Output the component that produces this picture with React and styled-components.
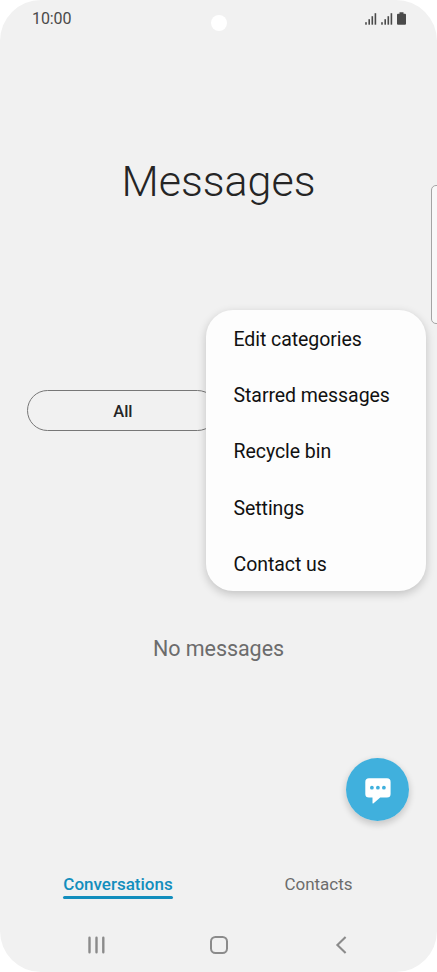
import React from 'react';
import styled, { createGlobalStyle } from 'styled-components';

const menuItems = [
    'Edit categories',
    'Starred messages',
    'Recycle bin',
    'Settings',
    'Contact us',
]

function Signal() {
    return (
        <svg width="12" height="12" viewBox="0 0 12 12" fill="#4a4a4a">
            <rect x="0.2" y="9.2" width="1.6" height="2.5" />
            <rect x="3.4" y="6.2" width="1.6" height="5.5" />
            <rect x="6.5" y="3.2" width="1.6" height="8.5" />
            <rect x="9.6" y="0.2" width="1.6" height="11.5" />
        </svg>
    );
}

function Battery() {
    return (
        <svg width="9" height="13" viewBox="0 0 9 13" fill="#4a4a4a">
            <path d="M2.5 0.3h4v1.4H8q1 0 1 1v9q0 1-1 1H1q-1 0-1-1v-9q0-1 1-1h1.5z" />
        </svg>
    );
}

export default function App() {
    return (
        <Phone>
            <GlobalStyle />
            <StatusBar>
                <Clock>10:00</Clock>
                <Camera />
                <StatusIcons>
                    <Signal />
                    <Signal />
                    <Battery />
                </StatusIcons>
            </StatusBar>
            <Header>
                <Title>Messages</Title>
            </Header>
            <Categories>
                <Category>All</Category>
            </Categories>
            <Empty>No messages</Empty>
            <Compose>
                <ComposeButton>
                    <svg width="26" height="26" viewBox="0 0 26 26">
                        <path d="M4 0.3H22Q25.6 0.3 25.6 4V16Q25.6 19.6 22 19.6H15.2L8.6 25.3Q7.5 26 7.5 24.7V19.6H4Q0.3 19.6 0.3 16V4Q0.3 0.3 4 0.3Z" fill="#fff" />
                        <circle cx="6.9" cy="9.7" r="1.9" fill="#40b0dd" />
                        <circle cx="12.9" cy="9.7" r="1.9" fill="#40b0dd" />
                        <circle cx="18.9" cy="9.7" r="1.9" fill="#40b0dd" />
                    </svg>
                </ComposeButton>
            </Compose>
            <Tabs>
                <Tab $active>Conversations</Tab>
                <Tab>Contacts</Tab>
            </Tabs>
            <NavBar>
                <svg width="18" height="18" viewBox="0 0 18 18" stroke="#8b8b8b" strokeWidth="2.4" strokeLinecap="round">
                    <path d="M2.5 1.8V16.2M9.5 1.8V16.2M16.3 1.8V16.2" />
                </svg>
                <svg width="18" height="18" viewBox="0 0 18 18" fill="none" stroke="#8b8b8b" strokeWidth="2">
                    <rect x="1" y="1" width="16" height="16" rx="4.5" />
                </svg>
                <svg width="18" height="18" viewBox="0 0 18 18" fill="none" stroke="#8b8b8b" strokeWidth="2.1">
                    <path d="M12.6 1L4.4 9L12.6 17" />
                </svg>
            </NavBar>
            <EdgePanel />
            <Menu>
                {menuItems.map((item) => (
                    <MenuItem key={item}>{item}</MenuItem>
                ))}
            </Menu>
        </Phone>
    );
}

const GlobalStyle = createGlobalStyle`
    * {
        box-sizing: border-box;
    }
    body {
        margin: 0;
        background: #fff;
        font-family: Roboto, sans-serif;
    }
    svg {
        display: block;
    }
`

const Phone = styled.div`
    position: relative;
    display: flex;
    flex-direction: column;
    width: 437px;
    height: 972px;
    overflow: hidden;
    border-radius: 41px;
    background: #f1f1f1;
`

const StatusBar = styled.div`
    display: grid;
    grid-template-columns: 1fr 16px 1fr;
    align-items: center;
    height: 38px;
    padding: 0 31px 0 32px;
`

const Clock = styled.span`
    font-size: 16px;
    line-height: 20px;
    letter-spacing: -0.1px;
    color: #4a4a4a;
`

const Camera = styled.div`
    width: 16px;
    height: 16px;
    margin-top: 8px;
    border-radius: 50%;
    background: #fff;
`

const StatusIcons = styled.div`
    display: flex;
    justify-content: flex-end;
    align-items: flex-end;
    gap: 4px;
    margin-top: -2px;
`

const Header = styled.header`
    display: flex;
    justify-content: center;
    align-items: center;
    height: 286px;
`

const Title = styled.h1`
    margin: 0;
    font-size: 43px;
    font-weight: 300;
    line-height: 50px;
    color: #252525;
`

const Categories = styled.div`
    display: flex;
    height: 107px;
    padding: 66px 27.4px 0;
`

const Category = styled.div`
    display: flex;
    justify-content: center;
    align-items: center;
    width: 191px;
    height: 41px;
    padding-top: 2px;
    border: 1px solid #777;
    border-radius: 21px;
    font-size: 16.5px;
    font-weight: 500;
    color: #252525;
`

const Empty = styled.p`
    display: flex;
    justify-content: center;
    margin: 205px 0 0;
    font-size: 21.5px;
    line-height: 26px;
    letter-spacing: -0.05px;
    color: #6c6c6c;
`

const Compose = styled.div`
    display: flex;
    justify-content: flex-end;
    margin-top: 95px;
    padding-right: 27px;
`

const ComposeButton = styled.div`
    display: flex;
    justify-content: center;
    align-items: center;
    width: 65px;
    height: 65px;
    padding-top: 2px;
    border: 0.5px solid transparent;
    border-radius: 50%;
    background: #40b0dd;
    background-clip: padding-box;
    box-shadow: 0 3px 6px rgba(0, 0, 0, 0.16);
`

const Tabs = styled.div`
    display: grid;
    grid-template-columns: 201px 200px;
    justify-content: center;
    justify-items: center;
    margin-top: 52px;
    padding-right: 1px;
`

const Tab = styled.div`
    position: relative;
    height: 25px;
    font-size: 17px;
    line-height: 20px;
    font-weight: ${(props) => (props.$active ? 500 : 400)};
    color: ${(props) => (props.$active ? '#138ebd' : '#6c6c6c')};

    &::after {
        content: '';
        position: absolute;
        left: 0;
        right: 0;
        bottom: 0;
        height: 3px;
        border-radius: 1.5px;
        background: ${(props) => (props.$active ? '#138ebd' : 'transparent')};
    }
`

const NavBar = styled.div`
    display: flex;
    justify-content: space-between;
    margin-top: 37px;
    padding: 0 86px 0 87px;
`

const EdgePanel = styled.div`
    position: absolute;
    top: 185px;
    right: -10px;
    width: 16px;
    height: 139px;
    border: 1px solid #a4a4a4;
    border-radius: 5px;
    background: #f8f8f8;
`

const Menu = styled.div`
    position: absolute;
    top: 310px;
    left: 206px;
    width: 220px;
    height: 281px;
    border-radius: 27px;
    background: #fdfdfd;
    box-shadow: 0 3px 10px rgba(0, 0, 0, 0.2);
`

const MenuItem = styled.div`
    display: flex;
    align-items: center;
    height: 56.3px;
    padding: 2px 27.5px 0;
    font-size: 19.5px;
    letter-spacing: -0.06px;
    color: #111;
`
